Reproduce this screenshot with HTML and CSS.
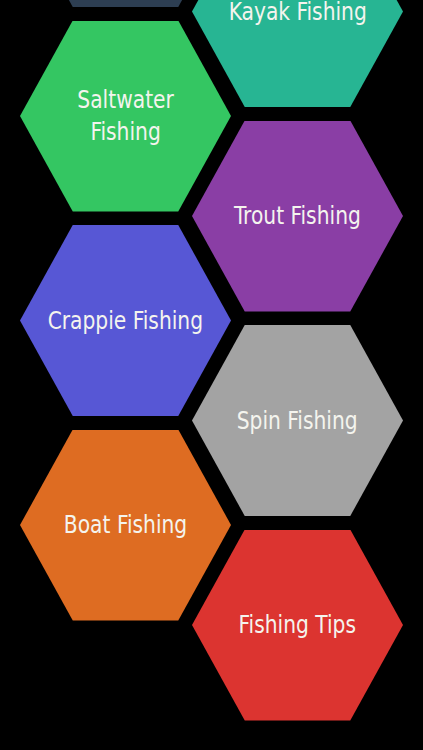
FILE: index.html
```html
<!DOCTYPE html>
<html lang="en">
<head>
<meta charset="utf-8">
<title>Fishing</title>
<link rel="stylesheet" href="styles.css">
</head>
<body>
<main class="board">
  <div class="col col-left">
    <div class="hex hex-navy"></div>
    <div class="hex hex-green"><span class="label">Saltwater<br>Fishing</span></div>
    <div class="hex hex-blue"><span class="label">Crappie Fishing</span></div>
    <div class="hex hex-orange"><span class="label">Boat Fishing</span></div>
  </div>
  <div class="col col-right">
    <div class="hex hex-teal"><span class="label">Kayak Fishing</span></div>
    <div class="hex hex-purple"><span class="label">Trout Fishing</span></div>
    <div class="hex hex-gray"><span class="label">Spin Fishing</span></div>
    <div class="hex hex-red"><span class="label">Fishing Tips</span></div>
  </div>
</main>
</body>
</html>
```
FILE: styles.css
```css
html, body {
  margin: 0;
  padding: 0;
  background: #000;
  height: 100%;
  overflow: hidden;
}
.board {
  display: flex;
  align-items: flex-start;
  padding-left: 20px;
}
.col {
  display: flex;
  flex-direction: column;
  gap: 13.5px;
}
.col-left {
  margin-top: -184px;
}
.col-right {
  margin-left: -39px;
  margin-top: -84px;
}
.hex {
  width: 211px;
  height: 191px;
  clip-path: polygon(25% 0, 75% 0, 100% 50%, 75% 100%, 25% 100%, 0 50%);
  display: flex;
  align-items: center;
  justify-content: center;
  text-align: center;
}
.label {
  font-family: "DejaVu Sans Condensed", "Open Sans", sans-serif;
  font-size: 25px;
  line-height: 32px;
  color: #f4f4ee;
  white-space: nowrap;
  transform: scaleX(0.9);
}
.hex-navy { background: #2d3e52; }
.hex-green { background: #34c662; }
.hex-blue { background: #5757d5; }
.hex-orange { background: #de6c22; }
.hex-teal { background: #27b593; }
.hex-purple { background: #8a3ea5; }
.hex-gray { background: #a3a3a3; }
.hex-red { background: #dc3430; }
```
